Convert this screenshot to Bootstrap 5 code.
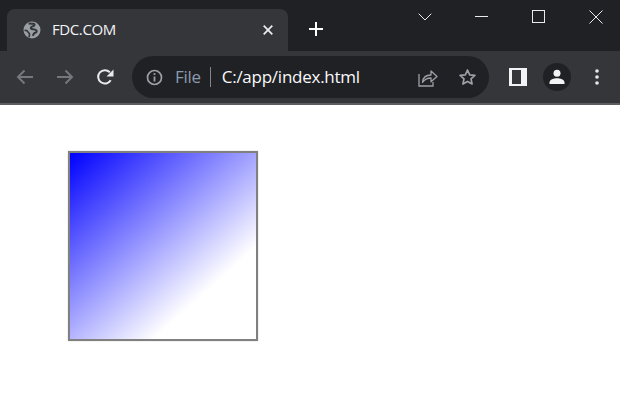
<!DOCTYPE html>
<html lang="en">
<head>
  <meta charset="UTF-8">
  <title>FDC.COM</title>
  <link href="https://cdn.jsdelivr.net/npm/bootstrap@5.3.0/dist/css/bootstrap.min.css" rel="stylesheet">
  <style>
    html, body { height: 100%; }
    body { background: #fff; font-family: "Open Sans", "Liberation Sans", sans-serif; overflow: hidden; }
    svg { display: block; flex: none; }

    .tab-strip { height: 51px; background: #202124; padding-left: 7px; }
    .tab-shape { width: 281px; height: 42px; margin-top: 9px; background: #35363a; border-radius: 8px 8px 0 0; padding: 0 15px 0 16px; }
    .tab-title { font-size: 15px; letter-spacing: -.4px; margin-left: 11px; margin-top: -1px; color: #f1f3f4; }
    .new-tab { margin: 21px 0 0 20px; }
    .win-controls { padding-top: 9px; margin-right: -4px; }
    .win-slot { width: 57px; height: 15px; }

    .tool-row { height: 54px; background: #35363a; border-bottom: 2px solid #5c5d60; padding: 5px 0 0 16px; }
    .nav-slot { width: 40px; height: 42px; }
    .reload-slot { width: 36px; height: 42px; }
    .omni { width: 357px; height: 42px; background: #202124; border-radius: 21px; padding: 0 12px 0 14px; }
    .omni-file { font-size: 17px; letter-spacing: -.3px; color: #8a9bb0; margin-left: 12px; }
    .omni-sep { width: 1px; height: 20px; background: #80868b; margin: 0 11px 0 9px; }
    .omni-url { font-size: 17px; letter-spacing: -.25px; color: #f8f9fa; }
    .star-icon { margin-left: 20px; }
    .side-group { height: 42px; margin-left: 20px; }
    .avatar-disc { width: 28px; height: 28px; border-radius: 50%; background: #202124; margin-left: 16px; }
    .menu-dots { margin-left: 24px; }

    .page-body { padding: 46px 0 0 68px; }
    .grad-box { width: 190px; height: 190px; border: 2px solid #808080; background: linear-gradient(138deg, #00f 0%, #fff 74%); box-shadow: 0 0 1px rgba(128, 128, 128, .6); }
  </style>
</head>
<body>
  <div class="tab-strip d-flex align-items-start">
    <div class="tab-shape d-flex align-items-center">
      <svg width="18" height="18" viewBox="0 0 18 18">
        <circle cx="9" cy="9" r="8.5" fill="#9aa0a6"/>
        <path d="M5.500 2.600c2 .1 4 .2 5.500.2 1 .6.600 1.800-.5 2.200-1.500.5-2.700 1-2.700 2 0 1 1.500 1.100 2.700 1.300 1.400.2 3.300.8 3.200 2.300-.1.900-1 1.100-2 1.400-1.100.4-1.300 1.500-1.900 2.800" fill="none" stroke="#35363a" stroke-width="2"/>
        <path d="M1.500 9.500c1.500-.3 3 .3 3.500 1.500.4 1 1.500 1 1.500 2.200 0 1.200-.3 2.300-.6 3" fill="none" stroke="#35363a" stroke-width="1.700"/>
      </svg>
      <span class="tab-title flex-grow-1">FDC.COM</span>
      <svg width="10" height="10" viewBox="0 0 10 10"><path d="M.7.7l8.600 8.600M9.300.7L.7 9.300" stroke="#e8eaed" stroke-width="1.800"/></svg>
    </div>
    <svg class="new-tab" width="16" height="16" viewBox="0 0 16 16"><path d="M8 1v14M1 8h14" stroke="#fff" stroke-width="2"/></svg>
    <div class="win-controls d-flex ms-auto">
      <div class="win-slot d-flex justify-content-center align-items-center">
        <svg width="14" height="8" viewBox="0 0 14 8"><path d="M.7.7L7 7l6.300-6.300" fill="none" stroke="#e8eaed" stroke-width="1"/></svg>
      </div>
      <div class="win-slot d-flex justify-content-center align-items-center">
        <svg width="13" height="1" viewBox="0 0 13 1"><path d="M0 .5h13" stroke="#e8eaed" stroke-width="1"/></svg>
      </div>
      <div class="win-slot d-flex justify-content-center align-items-center">
        <svg width="13" height="13" viewBox="0 0 13 13"><rect x=".5" y=".5" width="12" height="12" fill="none" stroke="#e8eaed"/></svg>
      </div>
      <div class="win-slot d-flex justify-content-center align-items-center">
        <svg width="14" height="14" viewBox="0 0 14 14"><path d="M.5.500l13 13M13.500.500l-13 13" stroke="#e8eaed" stroke-width="1"/></svg>
      </div>
    </div>
  </div>

  <div class="tool-row d-flex align-items-start">
    <div class="nav-slot d-flex align-items-center">
      <svg width="18" height="16" viewBox="0 0 18 16"><path d="M17 8H2M8.500 1.500L2 8l6.500 6.500" fill="none" stroke="#74777b" stroke-width="2"/></svg>
    </div>
    <div class="nav-slot d-flex align-items-center">
      <svg width="18" height="16" viewBox="0 0 18 16"><path d="M1 8h15M9.500 1.500L16 8l-6.500 6.500" fill="none" stroke="#74777b" stroke-width="2"/></svg>
    </div>
    <div class="reload-slot d-flex align-items-center">
      <svg width="18" height="18" viewBox="0 0 18 18"><path d="M14.700 12.200A6.700 6.700 0 1 1 13.800 4.300" fill="none" stroke="#e8eaed" stroke-width="2"/><path d="M17.500 1.500v7h-7z" fill="#e8eaed"/></svg>
    </div>
    <div class="omni d-flex align-items-center">
      <svg width="17" height="17" viewBox="0 0 17 17"><circle cx="8.500" cy="8.500" r="7" fill="none" stroke="#9aa0a6" stroke-width="1.700"/><path d="M8.500 7.500v5" stroke="#9aa0a6" stroke-width="1.800"/><path d="M8.500 4.200v1.800" stroke="#9aa0a6" stroke-width="1.800"/></svg>
      <span class="omni-file">File</span>
      <span class="omni-sep"></span>
      <span class="omni-url flex-grow-1">C:/app/index.html</span>
      <svg width="20" height="19" viewBox="0 0 20 19"><path d="M1 6v12h14v-4" fill="none" stroke="#9aa0a6" stroke-width="1.300"/><path d="M4.500 14.500c.3-4.500 3.500-7.500 8.500-7.500V3l6 5.500-6 5.200v-3.700c-3.500 0-6.500 1.500-8.500 4.500z" fill="none" stroke="#9aa0a6" stroke-width="1.300" stroke-linejoin="round"/></svg>
      <svg class="star-icon" width="19" height="18" viewBox="0 0 19 18"><path d="M9.500 2l2.200 4.800 5.200.6-3.900 3.500 1.100 5.100-4.600-2.600-4.600 2.600 1.100-5.100L2.100 7.400l5.200-.6z" fill="none" stroke="#9aa0a6" stroke-width="1.700" stroke-linejoin="round"/></svg>
    </div>
    <div class="side-group d-flex align-items-center">
      <svg width="18" height="18" viewBox="0 0 18 18"><rect width="18" height="18" fill="#f1f3f4"/><rect x="3" y="2" width="9" height="14" fill="#35363a"/></svg>
      <div class="avatar-disc d-flex justify-content-center align-items-center">
        <svg width="16" height="16" viewBox="0 0 16 16"><circle cx="8" cy="4.300" r="3.500" fill="#f1f3f4"/><path d="M.5 15v-1.500C.5 10.500 5 9.300 8 9.300s7.500 1.200 7.500 4.200V15z" fill="#f1f3f4"/></svg>
      </div>
      <svg class="menu-dots" width="4" height="16" viewBox="0 0 4 16"><circle cx="2" cy="2" r="1.800" fill="#e8eaed"/><circle cx="2" cy="8" r="1.800" fill="#e8eaed"/><circle cx="2" cy="14" r="1.800" fill="#e8eaed"/></svg>
    </div>
  </div>

  <div class="page-body">
    <div class="grad-box"></div>
  </div>

  <script src="https://cdn.jsdelivr.net/npm/bootstrap@5.3.0/dist/js/bootstrap.bundle.min.js"></script>
</body>
</html>
